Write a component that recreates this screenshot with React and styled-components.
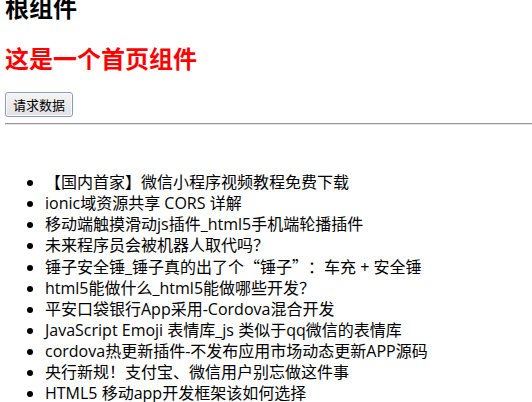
import React from "react";
import styled, { createGlobalStyle } from "styled-components";

const GlobalStyle = createGlobalStyle`
  html, body {
    margin: 0;
    padding: 0;
    background: #ffffff;
  }
  body {
    font-family: "Open Sans", "Noto Sans CJK SC", sans-serif;
    color: #000;
    overflow: hidden;
  }
`;

const Page = styled.div`
  padding-left: 5px;
  overflow: hidden;
`;

const RootTitle = styled.h1`
  margin: -7px 0 0;
  font-family: "Noto Sans CJK SC", sans-serif;
  font-size: 24px;
  line-height: 28px;
  font-weight: 700;
  color: #000;
`;

const HomeTitle = styled.h2`
  margin: 23px 0 0;
  font-family: "Noto Sans CJK SC", sans-serif;
  font-size: 24px;
  line-height: 28px;
  font-weight: 700;
  color: #ff0000;
`;

const Toolbar = styled.div`
  margin-top: 20px;
  display: flex;
`;

const Button = styled.button`
  height: 25px;
  padding: 0 7px;
  font-family: "Noto Sans CJK SC", sans-serif;
  font-size: 13px;
  line-height: 23px;
  color: #000;
  border: 1px solid #8a9cc0;
  border-radius: 3px;
  background: linear-gradient(#f4f4f4, #e2e2e4);
  box-shadow: inset 0 0 0 1px #fbfbfd;
  cursor: pointer;
`;

const Rule = styled.hr`
  margin: 6px 0 0;
  border: 0;
  border-top: 1px solid #9a9a9a;
  border-bottom: 1px solid #e4e4e4;
  height: 0;
`;

const NewsList = styled.ul`
  margin: 47px 0 0;
  padding-left: 40px;
  list-style: disc;
  font-size: 16px;
  line-height: 21px;
`;

const NewsItem = styled.li`
  white-space: nowrap;
`;

const Punct = styled.span`
  display: inline-block;
  width: 1em;
  font-family: "Noto Sans CJK SC", sans-serif;
  text-align: ${(p) => (p.$open ? "right" : "left")};
`;

const news = [
  "【国内首家】微信小程序视频教程免费下载",
  "ionic域资源共享 CORS 详解",
  "移动端触摸滑动js插件_html5手机端轮播插件",
  "未来程序员会被机器人取代吗？",
  "锤子安全锤_锤子真的出了个“锤子”：车充 + 安全锤",
  "html5能做什么_html5能做哪些开发？",
  "平安口袋银行App采用-Cordova混合开发",
  "JavaScript Emoji 表情库_js 类似于qq微信的表情库",
  "cordova热更新插件-不发布应用市场动态更新APP源码",
  "央行新规！支付宝、微信用户别忘做这件事",
  "HTML5 移动app开发框架该如何选择",
];

function renderTitle(text) {
  return text.split(/([“”])/).map((part, i) =>
    part === "“" || part === "”" ? (
      <Punct key={i} $open={part === "“"}>
        {part}
      </Punct>
    ) : (
      part
    )
  );
}

export default function App() {
  return (
    <>
      <GlobalStyle />
      <Page>
        <RootTitle>根组件</RootTitle>
        <HomeTitle>这是一个首页组件</HomeTitle>
        <Toolbar>
          <Button type="button">请求数据</Button>
        </Toolbar>
        <Rule />
        <NewsList>
          {news.map((t) => (
            <NewsItem key={t}>{renderTitle(t)}</NewsItem>
          ))}
        </NewsList>
      </Page>
    </>
  );
}
